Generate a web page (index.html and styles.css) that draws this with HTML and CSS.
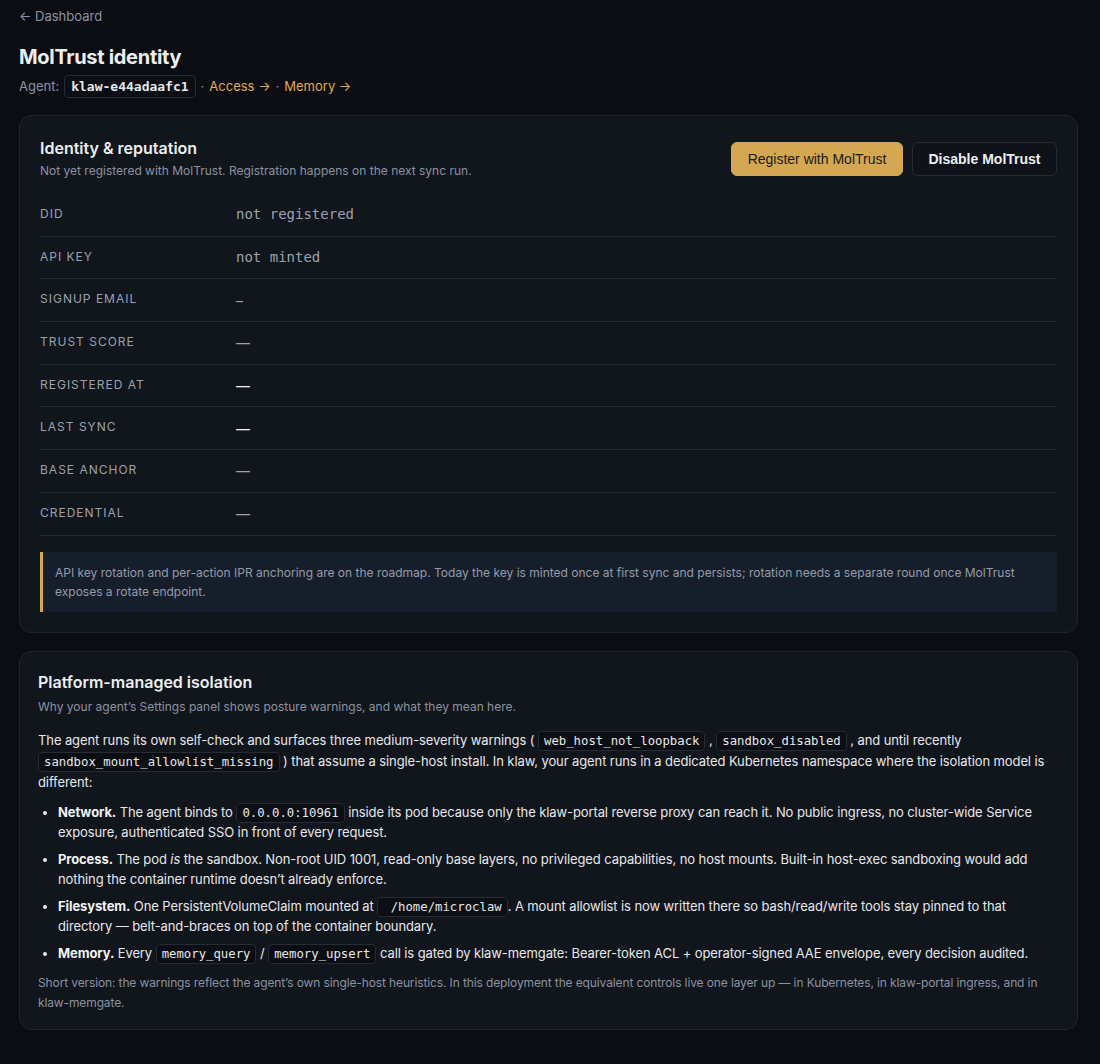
FILE: index.html
```html
<!DOCTYPE html>
<html lang="en">
<head>
<meta charset="utf-8">
<title>MolTrust identity</title>
<link rel="stylesheet" href="styles.css">
</head>
<body>
<div class="page">
  <a class="back" href="#">← Dashboard</a>
  <h1 class="title">MolTrust identity</h1>
  <div class="agent-line">
    <span class="muted">Agent:</span>
    <code class="chip chip-lg">klaw-e44adaafc1</code>
    <span class="dot">·</span>
    <a class="link" href="#">Access →</a>
    <span class="dot">·</span>
    <a class="link" href="#">Memory →</a>
  </div>

  <section class="card card-id">
    <div class="card-head">
      <div>
        <h2 class="card-title">Identity &amp; reputation</h2>
        <p class="card-sub">Not yet registered with MolTrust. Registration happens on the next sync run.</p>
      </div>
      <div class="actions">
        <button class="btn btn-primary">Register with MolTrust</button>
        <button class="btn btn-ghost">Disable MolTrust</button>
      </div>
    </div>

    <dl class="rows">
      <div class="row"><dt>DID</dt><dd class="mono">not registered</dd></div>
      <div class="row"><dt>API KEY</dt><dd class="mono">not minted</dd></div>
      <div class="row"><dt>SIGNUP EMAIL</dt><dd class="dash">–</dd></div>
      <div class="row"><dt>TRUST SCORE</dt><dd class="dash">—</dd></div>
      <div class="row"><dt>REGISTERED AT</dt><dd class="dash bright">—</dd></div>
      <div class="row"><dt>LAST SYNC</dt><dd class="dash bright">—</dd></div>
      <div class="row"><dt>BASE ANCHOR</dt><dd class="dash">—</dd></div>
      <div class="row"><dt>CREDENTIAL</dt><dd class="dash">—</dd></div>
    </dl>

    <div class="note">API key rotation and per-action IPR anchoring are on the roadmap. Today the key is minted once at first sync and persists; rotation needs a separate round once MolTrust exposes a rotate endpoint.</div>
  </section>

  <section class="card card-iso">
    <h2 class="card-title">Platform-managed isolation</h2>
    <p class="card-sub sub2">Why your agent’s Settings panel shows posture warnings, and what they mean here.</p>
    <p class="para">The agent runs its own self-check and surfaces three medium-severity warnings ( <code class="chip">web_host_not_loopback</code> , <code class="chip">sandbox_disabled</code> , and until recently <code class="chip">sandbox_mount_allowlist_missing</code> ) that assume a single-host install. In klaw, your agent runs in a dedicated Kubernetes namespace where the isolation model is different:</p>
    <ul class="list">
      <li><strong>Network.</strong> The agent binds to <code class="chip">0.0.0.0:10961</code> inside its pod because only the klaw-portal reverse proxy can reach it. No public ingress, no cluster-wide Service exposure, authenticated SSO in front of every request.</li>
      <li><strong>Process.</strong> The pod <em>is</em> the sandbox. Non-root UID 1001, read-only base layers, no privileged capabilities, no host mounts. Built-in host-exec sandboxing would add nothing the container runtime doesn’t already enforce.</li>
      <li><strong>Filesystem.</strong> One PersistentVolumeClaim mounted at <code class="chip">&nbsp;/home/microclaw</code>. A mount allowlist is now written there so bash/read/write tools stay pinned to that directory — belt-and-braces on top of the container boundary.</li>
      <li><strong>Memory.</strong> Every <code class="chip">memory_query</code> / <code class="chip">memory_upsert</code> call is gated by klaw-memgate: Bearer-token ACL + operator-signed AAE envelope, every decision audited.</li>
    </ul>
    <p class="short">Short version: the warnings reflect the agent’s own single-host heuristics. In this deployment the equivalent controls live one layer up — in Kubernetes, in klaw-portal ingress, and in klaw-memgate.</p>
  </section>
</div>
</body>
</html>
```

FILE: styles.css
```css
* { box-sizing: border-box; }

html, body {
  margin: 0;
  padding: 0;
  background: #0b0d12;
}

body {
  font-family: Inter, "Noto Sans", "Liberation Sans", sans-serif;
  color: #e6e8eb;
  font-size: 13px;
}

.page {
  padding: 8px 22px 30px 19px;
}

.back {
  display: block;
  color: #8b93a1;
  font-size: 13px;
  line-height: 16px;
  text-decoration: none;
}

.title {
  margin: 21px 0 0;
  font-size: 20px;
  line-height: 24px;
  font-weight: 700;
  color: #eceef1;
  letter-spacing: -0.3px;
}

.agent-line {
  margin-top: 5px;
  display: flex;
  align-items: center;
  gap: 4px;
  font-size: 13px;
  line-height: 24px;
}

.muted { color: #8b93a1; }
.dot { color: #8b93a1; margin: 0 1px; }

.link {
  color: #e0ab4c;
  text-decoration: none;
}

.chip {
  font-family: "DejaVu Sans Mono", "Liberation Mono", monospace;
  font-size: 12.3px;
  line-height: 1;
  letter-spacing: 0;
  color: #e6e8eb;
  background: #0b0e13;
  border: 1px solid #262b35;
  border-radius: 4px;
  padding: 2px 5px;
}

.chip-lg {
  font-size: 13px;
  font-weight: 600;
  padding: 2px 6px;
  margin-left: 1px;
  line-height: 17px;
}

.card {
  background: #11151c;
  border: 1px solid #1f242d;
  border-radius: 12px;
}

.card-id {
  margin-top: 17px;
  padding: 20px 20px 20px 20px;
}

.card-head {
  display: flex;
  justify-content: space-between;
  align-items: center;
}

.card-title {
  margin: 0;
  font-size: 16px;
  line-height: 24px;
  font-weight: 600;
  color: #eceef1;
}

.card-sub {
  margin: 3px 0 0;
  font-size: 12px;
  line-height: 16px;
  color: #8b93a1;
}

.actions {
  display: flex;
  gap: 9px;
  padding-top: 3px;
}

.btn {
  height: 34px;
  border-radius: 6px;
  font-family: "Liberation Sans", Arial, sans-serif;
  font-size: 14px;
  cursor: pointer;
}

.btn-primary {
  width: 172px;
  background: #d4a753;
  border: 1px solid #d4a753;
  color: #1b1a17;
}

.btn-ghost {
  width: 145px;
  background: #0f1218;
  border: 1px solid #262b35;
  color: #eceef1;
  font-weight: 700;
}

.rows {
  margin: 15px 0 0;
}

.row {
  display: flex;
  align-items: center;
  height: 42.7px;
  padding-bottom: 3px;
  border-bottom: 1px solid #262b34;
}

.row dt {
  width: 196px;
  flex: none;
  font-size: 12px;
  letter-spacing: 1px;
  color: #9ba2af;
}

.row dd {
  margin: 0;
  color: #9ca3af;
  font-size: 14px;
}

.row dd.mono {
  font-family: "DejaVu Sans Mono", "Liberation Mono", monospace;
  font-size: 14px;
  padding-top: 2px;
}

.row dd.dash {
  font-size: 14px;
  padding-top: 3px;
}

.row dd.bright { color: #eceef1; }

.note {
  margin-top: 16px;
  background: #171e2b;
  border-left: 3px solid #d4a753;
  padding: 11px 14px 11px 12px;
  font-size: 12px;
  line-height: 19px;
  color: #949caa;
}

.card-iso {
  margin-top: 18px;
  padding: 18px 18px 16px 18px;
}

.sub2 { margin-top: 5px; }

.para {
  margin: 15px 0 0;
  font-size: 13px;
  line-height: 21px;
  color: #e6e8eb;
  letter-spacing: -0.1px;
}

.list {
  margin: 9px 0 0;
  padding-left: 20px;
}

.list li {
  font-size: 13px;
  line-height: 20.5px;
  margin-bottom: 6px;
  color: #e6e8eb;
  letter-spacing: -0.1px;
}

.list li:last-child { margin-bottom: 0; }

.list strong { font-weight: 700; color: #f1f2f4; }

.short {
  margin: 10px 0 0;
  font-size: 12px;
  line-height: 20px;
  color: #8b93a1;
  letter-spacing: -0.12px;
}
```
